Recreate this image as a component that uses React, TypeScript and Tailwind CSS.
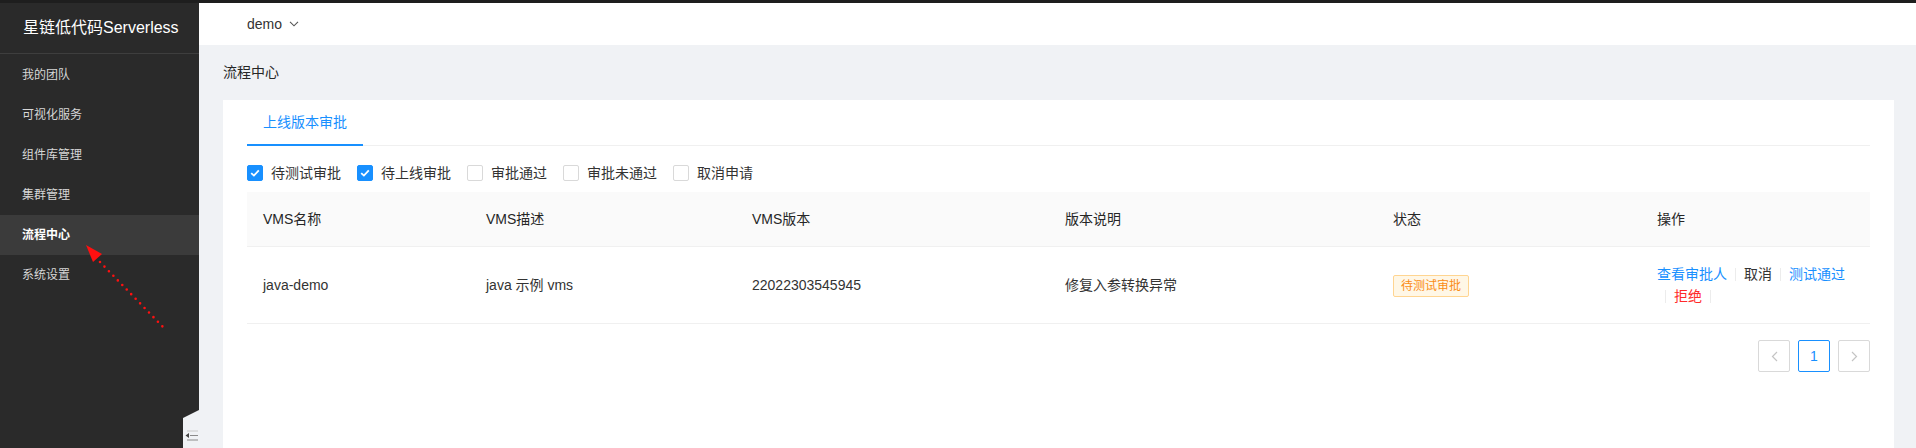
import React from "react";

const menu = ["我的团队", "可视化服务", "组件库管理", "集群管理", "流程中心", "系统设置"];

const filters: { label: string; checked: boolean }[] = [
  { label: "待测试审批", checked: true },
  { label: "待上线审批", checked: true },
  { label: "审批通过", checked: false },
  { label: "审批未通过", checked: false },
  { label: "取消申请", checked: false },
];

const cols = [
  { title: "VMS名称", w: "w-[223px]" },
  { title: "VMS描述", w: "w-[266px]" },
  { title: "VMS版本", w: "w-[313px]" },
  { title: "版本说明", w: "w-[328px]" },
  { title: "状态", w: "w-[264px]" },
  { title: "操作", w: "w-[229px]" },
];

function Divider() {
  return <span className="inline-block w-px h-[13px] bg-[#ececec] mx-2 align-[-2px]" />;
}

function Checkbox({ checked, label }: { checked: boolean; label: string }) {
  return (
    <label className="flex items-center mr-2 h-[22px]">
      {checked ? (
        <span className="w-4 h-4 rounded-[2px] bg-[#1890ff] border border-[#1890ff] flex items-center justify-center">
          <svg width="10" height="8" viewBox="0 0 10 8">
            <path d="M1.2 4.1 L3.9 6.6 L8.8 1.3" fill="none" stroke="white" strokeWidth="1.8" />
          </svg>
        </span>
      ) : (
        <span className="w-4 h-4 rounded-[2px] bg-white border border-[#d9d9d9]" />
      )}
      <span className="px-2 text-[14px] leading-[22px] text-[#333]">{label}</span>
    </label>
  );
}

export default function App() {
  return (
    <div className="relative w-[1916px] h-[448px] overflow-hidden flex flex-col bg-[#f0f2f5] font-['Liberation_Sans','Noto_Sans_CJK_SC',sans-serif]">
      <div className="h-[3px] shrink-0 bg-[#1e1e1e]" />
      <div className="flex flex-1 min-h-0">
        <aside className="relative w-[199px] shrink-0 bg-[#2a2a2a]">
          <div className="h-[51px] flex items-center pl-[23px] text-[16px] text-white border-b border-[#3e3e3e]">
            星链低代码Serverless
          </div>
          <nav className="pt-px">
            {menu.map((m) => (
              <div
                key={m}
                className={
                  m === "流程中心"
                    ? "h-10 flex items-center pl-[22px] text-[12px] font-bold text-white bg-[#3b3b3b]"
                    : "h-10 flex items-center pl-[22px] text-[12px] text-[#d6d6d6]"
                }
              >
                {m}
              </div>
            ))}
          </nav>
          <div className="absolute right-0 bottom-0 w-4 h-[38px] bg-[#f0f2f5] [clip-path:polygon(0_8px,100%_0,100%_100%,0_100%)] flex items-end justify-center pb-[7px]">
            <svg width="13" height="11" viewBox="0 0 13 11">
              <line x1="2" y1="1" x2="13" y2="1" stroke="#c8c8c8" strokeWidth="1" />
              <line x1="5" y1="5.5" x2="13" y2="5.5" stroke="#8a8a8a" strokeWidth="1" />
              <line x1="2" y1="10" x2="13" y2="10" stroke="#8a8a8a" strokeWidth="1" />
              <path d="M0.5 5.5 L4 3 L4 8 Z" fill="#444" />
            </svg>
          </div>
        </aside>
        <main className="flex-1 min-w-0 flex flex-col">
          <header className="h-[42px] shrink-0 bg-white flex items-center pl-[48px] text-[14px] text-[#333]">
            <span>demo</span>
            <svg className="ml-[7px]" width="10" height="6" viewBox="0 0 10 6">
              <path d="M1 0.8 L5 4.8 L9 0.8" fill="none" stroke="#555" strokeWidth="1.1" />
            </svg>
          </header>
          <div className="flex-1 flex flex-col pl-6 pr-[22px]">
            <div className="h-[55px] shrink-0 flex items-center text-[14px] text-[#262626]">流程中心</div>
            <div className="flex-1 bg-white px-6">
              <div className="flex border-b border-[#f0f0f0]">
                <div className="relative px-4 pt-[11px] pb-[12px] text-[14px] leading-[22px] text-[#1890ff]">
                  上线版本审批
                  <span className="absolute left-0 right-0 bottom-[-1px] h-[2px] bg-[#1890ff]" />
                </div>
              </div>
              <div className="mt-4 flex items-center">
                {filters.map((f) => (
                  <Checkbox key={f.label} checked={f.checked} label={f.label} />
                ))}
              </div>
              <div className="mt-2 w-[1623px]">
                <div className="flex bg-[#fafafa] border-b border-[#f0f0f0]">
                  {cols.map((c) => (
                    <div key={c.title} className={`${c.w} p-4 text-[14px] leading-[22px] text-[#262626]`}>
                      {c.title}
                    </div>
                  ))}
                </div>
                <div className="flex items-center border-b border-[#f0f0f0] text-[14px] leading-[22px] text-[#333]">
                  <div className="w-[223px] px-4">java-demo</div>
                  <div className="w-[266px] px-4">java 示例 vms</div>
                  <div className="w-[313px] px-4">22022303545945</div>
                  <div className="w-[328px] px-4">修复入参转换异常</div>
                  <div className="w-[264px] px-4">
                    <span className="inline-block px-[7px] text-[12px] leading-[20px] rounded-[2px] border border-[#ffd591] bg-[#fff7e6] text-[#fa8c16]">
                      待测试审批
                    </span>
                  </div>
                  <div className="w-[229px] p-4">
                    <span className="whitespace-nowrap text-[#1890ff]">查看审批人</span>
                    <Divider />
                    <span className="whitespace-nowrap text-[#333]">取消</span>
                    <Divider />
                    <span className="whitespace-nowrap text-[#1890ff]">测试通过</span>
                    <Divider />
                    <span className="whitespace-nowrap text-[#ff2a2a]">拒绝</span>
                    <Divider />
                  </div>
                </div>
                <div className="mt-4 flex justify-end gap-2">
                  <div className="w-8 h-8 rounded-[2px] border border-[#d9d9d9] flex items-center justify-center">
                    <svg width="7" height="11" viewBox="0 0 7 11">
                      <path d="M6 1 L1.5 5.5 L6 10" fill="none" stroke="#c4c4c4" strokeWidth="1.2" />
                    </svg>
                  </div>
                  <div className="w-8 h-8 rounded-[2px] border border-[#1890ff] flex items-center justify-center text-[14px] text-[#1890ff]">
                    1
                  </div>
                  <div className="w-8 h-8 rounded-[2px] border border-[#d9d9d9] flex items-center justify-center">
                    <svg width="7" height="11" viewBox="0 0 7 11">
                      <path d="M1 1 L5.5 5.5 L1 10" fill="none" stroke="#c4c4c4" strokeWidth="1.2" />
                    </svg>
                  </div>
                </div>
              </div>
            </div>
          </div>
        </main>
      </div>
      <svg className="absolute left-0 top-0 pointer-events-none" width="200" height="340" viewBox="0 0 200 340">
        <line
          x1="100"
          y1="262"
          x2="163"
          y2="327"
          stroke="#ff1010"
          strokeWidth="2.6"
          strokeLinecap="round"
          strokeDasharray="0 6.4"
        />
        <polygon points="86,245 102,254 93,262" fill="#ff1010" />
      </svg>
    </div>
  );
}
